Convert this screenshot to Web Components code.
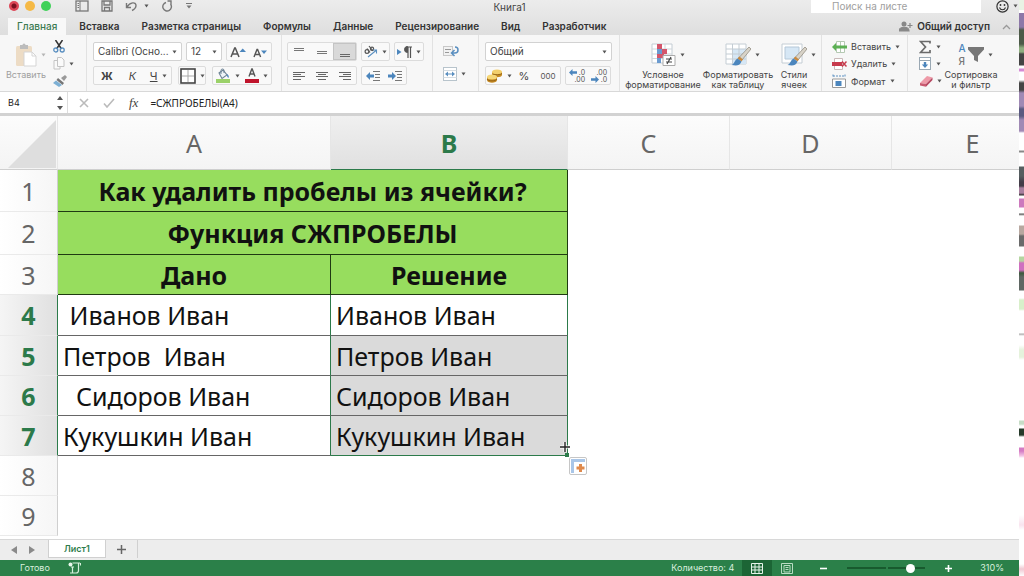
<!DOCTYPE html>
<html lang="ru">
<head>
<meta charset="utf-8">
<title>Книга1</title>
<style>
  html, body { margin: 0; height: 100%; overflow: hidden; background: #fff; }
  body { font-family: Inter, "Liberation Sans", sans-serif; color: #333; }
</style>
</head>
<body>
<workbook-app></workbook-app>
<script>
const ICONS = {
  sidebar: [14, 12, '<rect x="1" y="1" width="12" height="10" fill="none" stroke="#777" stroke-width="1.3"/><path d="M5 1v10M2.5 3.5h1.5M2.5 5.5h1.5M2.5 7.500h1.5" stroke="#777"/>'],
  save: [12, 12, '<path d="M1 1h10v10H1zM3 1v4h6V1M3.500 11V7.500h5V11" fill="none" stroke="#777" stroke-width="1.300"/>'],
  undo: [13, 12, '<path d="M1.500 3v4.500h4.500M2 7C5 2 11 1.500 11 5.500c0 2.500-2 4-4 5" fill="none" stroke="#777" stroke-width="1.400"/>'],
  redo: [12, 12, '<path d="M9.500 4A4.300 4.300 0 1 1 5 2.500M6.500 1h3.500v3.500" fill="none" stroke="#777" stroke-width="1.400"/>'],
  more: [8, 8, '<path d="M1 1.500h6" stroke="#777"/><path d="M1.500 3.500h5L4 6.500z" fill="#777"/>'],
  down: [5, 4, '<path d="M.5.500h4L2.500 3.500z" fill="#555"/>'],
  updown: [6, 14, '<path d="M3 0l3 4H0zM3 14l3-4H0z" fill="#555"/>'],
  smile: [13, 13, '<circle cx="6.500" cy="6.500" r="5.600" fill="none" stroke="#333" stroke-width="1.200"/><circle cx="4.500" cy="5" r=".9" fill="#333"/><circle cx="8.500" cy="5" r=".9" fill="#333"/><path d="M3.500 7.500c1 3 5 3 6 0" fill="none" stroke="#333" stroke-width="1.100"/>'],
  person: [14, 11, '<circle cx="5" cy="3" r="2.500" fill="#888"/><path d="M0 10c0-5 10-5 10 0zM8.500 4.500h5M11 2v5" fill="#888" stroke="#888" stroke-width="1.200"/>'],
  chevron: [9, 6, '<path d="M1 5l3.500-3.500L8 5" fill="none" stroke="#999" stroke-width="1.300"/>'],
  paste: [22, 24, '<rect x="1" y="3" width="16" height="20" rx="1.500" fill="#eddcc5"/><path d="M5 2h2.500a1.500 1.500 0 0 1 3 0H13v4H5z" fill="#bcbcbc"/><path d="M9 9h8l4 4v10H9z" fill="#fff" stroke="#d5d5d5"/><path d="M17 9v4h4" fill="none" stroke="#d5d5d5"/>'],
  cut: [12, 13, '<path d="M2.500 0l6 9M9.500 0l-6 9" stroke="#333" stroke-width="1.500"/><circle cx="2.800" cy="10" r="2" fill="none" stroke="#5a8fc0" stroke-width="1.300"/><circle cx="9.200" cy="10" r="2" fill="none" stroke="#5a8fc0" stroke-width="1.300"/>'],
  copy: [12, 13, '<path d="M1 3.500h6v8.500H1z" fill="#fafafa" stroke="#c4c4c4"/><path d="M4.500.500h4l2.500 2.500v6.500H4.500z" fill="#fafafa" stroke="#c4c4c4"/>'],
  brush: [14, 12, '<path d="M8 3l4-3 2 2-3 4z" fill="#9a9a9a"/><path d="M5 3l6 5-1.500 2L3.500 5z" fill="#777"/><path d="M3 5.500l6 4.500L6 12 0 8z" fill="#7db0d4"/>'],
  fontUp: [16, 12, '<path d="M1 11L4.700 2h.6L9 11M2.500 8h5" fill="none" stroke="#555" stroke-width="1.500"/><path d="M9.500 6L12.700 2.500 16 6z" fill="#4c86bd"/>'],
  fontDown: [14, 12, '<path d="M1 11L4 3.500h.6L7.600 11M2 8.500h4.600" fill="none" stroke="#555" stroke-width="1.400"/><path d="M8 4.500h6L11 8z" fill="#4c86bd"/>'],
  borders: [16, 16, '<rect x="1" y="1" width="14" height="14" fill="#fff" stroke="#444" stroke-width="1.600"/><path d="M8 2v12M2 8h12" stroke="#aaa"/>'],
  fill: [16, 15, '<path d="M4 5l4-3 4 5-5 3.500z" fill="#eef4f8" stroke="#6b8294" stroke-width="1.100"/><path d="M6 6V2.500a1.500 1.500 0 0 1 3 0V5" fill="none" stroke="#6b8294"/><path d="M12 6c2 1 2 3 1.500 4C12 9 12 8 12 6z" fill="#4c86bd"/><rect x="1" y="11" width="14" height="4" fill="#9bd169"/>'],
  fontColor: [14, 15, '<path d="M4 8.500L6.800 1h.4L10 8.500M5 6h4" fill="none" stroke="#555" stroke-width="1.400"/><rect y="11" width="14" height="4" fill="#c0142c"/>'],
  alTop: [12, 12, '<path d="M1 2.500h10M1 4.500h10" stroke="#777" stroke-width="1.200"/>'],
  alMid: [12, 12, '<path d="M1 5.500h10M1 7.500h10" stroke="#777" stroke-width="1.200"/>'],
  alBot: [12, 12, '<path d="M1 8.500h10M1 10.500h10" stroke="#666" stroke-width="1.200"/>'],
  alLeft: [12, 10, '<path d="M0 1.500h12M0 3.500h8M0 5.500h12M0 8.500h8" stroke="#666"/>'],
  alCenter: [12, 10, '<path d="M0 1.500h12M2 3.500h8M0 5.500h12M2 8.500h8" stroke="#666"/>'],
  alRight: [12, 10, '<path d="M0 1.500h12M4 3.500h8M0 5.500h12M4 8.500h8" stroke="#666"/>'],
  orient: [14, 13, '<circle cx="3" cy="6.500" r="1.900" fill="none" stroke="#555" stroke-width="1.200"/><path d="M3 3.500l3 4M5 1l4 5" stroke="#555" stroke-width="1.200"/><circle cx="8" cy="3.800" r="1.600" fill="none" stroke="#555" stroke-width="1.200"/><path d="M4 12l8-6.500M12.500 8.500V5H9" fill="none" stroke="#5a8fc0" stroke-width="1.100"/>'],
  rtl: [15, 12, '<path d="M0 3l4.500 3L0 9z" fill="#4c86bd"/><path d="M11 1v11M13.500 1v11M15 1H9" stroke="#555" stroke-width="1.200"/><path d="M10.500.500a3 3 0 0 0 0 6z" fill="#555" stroke="#555"/>'],
  outdent: [15, 10, '<path d="M7 .500h7M9 3.500h5M9 6.500h5M7 9.500h7" stroke="#777"/><path d="M0 5l4-4v2.500h4v3H4V9z" fill="#4c86bd"/>'],
  indent: [15, 10, '<path d="M7 .500h7M9 3.500h5M9 6.500h5M7 9.500h7" stroke="#777"/><path d="M8 5L4 1v2.500H0v3h4V9z" fill="#4c86bd"/>'],
  wrap: [17, 12, '<rect x=".5" y="1.500" width="9" height="9" fill="#f2f2f2" stroke="#c8c8c8"/><path d="M2 4.500h6M2 7.500h4" stroke="#999"/><path d="M12 2c4 0 4 6 0 6H9M11.500 5L8.500 8l3 3" fill="none" stroke="#5a8fc0" stroke-width="1.500"/>'],
  merge: [14, 14, '<rect x=".5" y=".5" width="13" height="13" fill="#fff" stroke="#b8c4cc"/><path d="M.5 3.500h13M.5 10.500h13" stroke="#d6dde2"/><path d="M2 7l3-2.500v2h4v-2L12 7 9 9.500v-2H5v2z" fill="#5a8fc0"/>'],
  coins: [17, 14, '<path d="M6 3v3c0 3 10 3 10 0V3z" fill="#c68a22"/><ellipse cx="11" cy="3" rx="5" ry="2.500" fill="#f3cf6c"/><path d="M1 8v3c0 3.500 10 3.500 10 0V8z" fill="#c68a22"/><ellipse cx="6" cy="8" rx="5" ry="2.500" fill="#f6d778"/><path d="M1 10c1 2.500 9 2.500 10 0M7 5c2 1 7 1 9-.5" fill="none" stroke="#8c5c12" stroke-width=".8"/>'],
  cond: [25, 24, '<path d="M1 1h20v19H1z" fill="#fff" stroke="#c4cdd4"/><path d="M1 6h20M1 11h20M1 15.500h20M7.500 1v19M14 1v19" stroke="#cfd6db"/><path d="M6 1h5v5H6zM6 11h7v4H6z" fill="#d4566b"/><path d="M11 6h5v5h-5z" fill="#d4566b"/><path d="M6 6h5v5H6zM6 15h4v5H6z" fill="#6b9bd0"/><path d="M12 12.500h12v10H12z" fill="#fff" stroke="#aaa"/><path d="M15 16h6M15 19h6M20 14l-4 7" stroke="#444" stroke-width="1.200"/>'],
  fmtTable: [26, 24, '<path d="M1 1h20v20H1z" fill="#fff" stroke="#c4cdd4"/><path d="M7.500 6H21v15H7.500z" fill="#d6e7f5"/><path d="M1 6h20M1 11h20M1 16h20M7.500 1v20M14 1v20" stroke="#c3ccd3"/><path d="M24 4l2 2-9 11-3.500-2z" fill="#d8d3c8" stroke="#8a8479" stroke-width=".7"/><path d="M14.500 13.500l3.500 3-1.500 2-4-3z" fill="#c88a40"/><path d="M12.500 15.500l4 3c-2 5-6 4-10 3.500 3-1 3-5 6-6.500z" fill="#4c86bd"/>'],
  styles: [26, 24, '<path d="M1 1h20v19H1z" fill="#fff" stroke="#c4cdd4"/><path d="M4 4h14v12H4z" fill="#d6e7f5" stroke="#b5c8d8"/><path d="M24 4l2 2-9 11-3.500-2z" fill="#d8d3c8" stroke="#8a8479" stroke-width=".7"/><path d="M14.500 13.500l3.500 3-1.500 2-4-3z" fill="#c88a40"/><path d="M12.500 15.500l4 3c-2 5-6 4-10 3.500 3-1 3-5 6-6.500z" fill="#4c86bd"/>'],
  insert: [15, 12, '<path d="M4.500.500h8v11h-8z" fill="#fff" stroke="#b5c9b3"/><path d="M8.500 1v10" stroke="#b5c9b3"/><path d="M0 6l4-4v2.500h11v3H4V10z" fill="#5cb054"/>'],
  remove: [15, 12, '<path d="M2.500.500h8v11h-8z" fill="#fff" stroke="#c9b9b9"/><path d="M0 4h10v4H0z" fill="#c73a4c"/><path d="M10 3.500l4.500 5M14.500 3.500l-4.500 5" stroke="#c73a4c" stroke-width="1.500"/>'],
  format: [15, 14, '<path d="M1 2h12M1 .500v3M13 .500v3" stroke="#5a8fc0" stroke-dasharray="2 1"/><path d="M.5 5h13v8.500H.5z" fill="#fff" stroke="#999"/><path d="M3.500 7h6v5h-6z" fill="#4c86bd"/>'],
  sum: [13, 14, '<path d="M11 3.500V1.500H1.500l5 5.500-5 5.500H11V10" fill="none" stroke="#6a6a6a" stroke-width="1.700"/>'],
  fillDown: [13, 13, '<rect x=".5" y=".5" width="11" height="12" fill="#fff" stroke="#9aa8b3"/><path d="M1 3.500h10" stroke="#9aa8b3"/><path d="M4.800 5h2.400v2.500h2L6 11 2.800 7.500h2z" fill="#4c86bd"/>'],
  eraser: [14, 12, '<path d="M8 1l5.500 1.500L7 9 1 8z" fill="#ee9aa8"/><path d="M1 8l6 1v2.800L1 10.500z" fill="#c95a70"/><path d="M7 9l6.500-6.500V5L7 11.800z" fill="#b64760"/>'],
  funnel: [16, 16, '<path d="M0 0h16v2.500L10 9v6l-4-2V9L0 2.500z" fill="#777"/>'],
  cross: [10, 10, '<path d="M1 1l8 8M9 1L1 9" stroke="#bbb" stroke-width="1.600"/>'],
  check: [12, 10, '<path d="M1 5.500L4 9l7-8" fill="none" stroke="#bbb" stroke-width="1.600"/>'],
  decUp: [8, 7, '<path d="M0 3.500L3.500 0v2.200H8v2.600H3.500V7z" fill="#4c86bd"/>'],
  prev: [6, 8, '<path d="M6 0v8L0 4z" fill="#8a8a8a"/>'],
  next: [6, 8, '<path d="M0 0v8l6-4z" fill="#8a8a8a"/>'],
  plus: [9, 9, '<path d="M4.500 0v9M0 4.500h9" stroke="#666" stroke-width="1.500"/>'],
  macro: [13, 12, '<path d="M4.500 1H12M10.500 1v7.500c0 2-1.500 2.500-2.500 2.500H2M12.500 1v2.500" fill="none" stroke="#d5f0dc" stroke-width="1.200"/><circle cx="2.500" cy="2.500" r="2" fill="#e8f8ec"/><path d="M4.500 5v6M3 5h3" stroke="#d5f0dc" stroke-width="1.200"/>'],
  viewGrid: [12, 11, '<path d="M.5.500h11v10H.5zM.5 4h11M.5 7h11M4 .500v10M8 .500v10" fill="none" stroke="#e5f4e9"/>'],
  viewPage: [12, 11, '<path d="M.5.500h11v10H.5zM3 2.500h6v6.500H3zM4.500 4.500h3M4.500 6.500h3" fill="none" stroke="#b9dcc3"/>'],
  zoomOut: [7, 7, '<path d="M0 3.500h7" stroke="#fff" stroke-width="1.600"/>'],
  zoomIn: [7, 7, '<path d="M0 3.500h7M3.500 0v7" stroke="#fff" stroke-width="1.600"/>'],
  corner: [48, 48, '<path d="M48 0v48H0z" fill="#dedede"/>'],
  cursor: [10, 10, '<path d="M5 0v10M0 5h10" stroke="#fff" stroke-width="3"/><path d="M5 0v10M0 5h10" stroke="#222" stroke-width="1.400"/>'],
  pasteOpt: [14, 14, '<path d="M0 0h14v3H3v11H0z" fill="#a9c6e8"/><path d="M9.500 5v8M5.500 9h8" stroke="#e08a4c" stroke-width="3"/>']
};

const define = (name, html, setup) => {
  const template = document.createElement('template');
  template.innerHTML = html;
  customElements.define(name, class extends HTMLElement {
    constructor() {
      super();
      this.attachShadow({ mode: 'open' }).append(template.content.cloneNode(true));
    }
    connectedCallback() { if (setup) setup(this, this.shadowRoot); }
  });
};

define('ui-icon', '<style>:host{display:inline-flex;flex:none}svg{display:block}</style><svg aria-hidden="true"></svg>', (el, root) => {
  const [w, h, body] = ICONS[el.getAttribute('name')];
  const svg = root.querySelector('svg');
  svg.setAttribute('width', w);
  svg.setAttribute('height', h);
  svg.setAttribute('viewBox', `0 0 ${w} ${h}`);
  svg.innerHTML = body;
});

define('tool-button', `<style>
  :host { display: block; }
  button { all: unset; box-sizing: border-box; width: 100%; height: 100%; display: flex; align-items: center; justify-content: center; gap: var(--gap, 4px); cursor: default; }
  :host([pressed]) button { background: #d9d9d9; box-shadow: inset 0 0 0 1px #c4c4c4; }
</style><button type="button"><slot></slot></button>`, (el, root) => {
  const b = root.querySelector('button');
  if (el.hasAttribute('label')) b.setAttribute('aria-label', el.getAttribute('label'));
  if (el.hasAttribute('pressed')) b.setAttribute('aria-pressed', 'true');
});

define('button-strip', `<style>
  :host { display: flex; box-sizing: border-box; height: 19px; border: 1px solid #dcdcdc; border-radius: 2px; background: #f9f9f9; }
  ::slotted(tool-button) { flex: 1; }
</style><slot></slot>`);

define('combo-box', `<style>
  :host { display: grid; grid-template: 17px / 1fr; box-sizing: border-box; height: 19px; border: 1px solid #d2d2d2; border-radius: 2px; background: #fff; align-items: center; }
  select { all: unset; grid-area: 1 / 1; padding: 0 4px; font: 10px/17px Inter, sans-serif; color: #444; white-space: nowrap; }
  ui-icon { grid-area: 1 / 1; justify-self: end; padding: 0 4px; pointer-events: none; }
</style><select></select><ui-icon name="down"></ui-icon>`, (el, root) => {
  const s = root.querySelector('select');
  s.setAttribute('aria-label', el.getAttribute('label'));
  s.add(new Option(el.getAttribute('value')));
});

define('title-bar', `<style>
  :host { display: grid; grid-template-columns: 1fr auto 1fr; height: 18px; align-items: start; }
  .left { display: flex; align-items: center; height: 11px; padding-left: 9px; }
  .light { all: unset; width: 10px; height: 10px; border-radius: 50%; margin-right: 6px; background: var(--c); }
  .light.close { background: radial-gradient(circle, #7a1020 2px, #dd4556 3px); }
  .tools { display: flex; align-items: center; gap: 12px; padding-left: 18px; --gap: 6px; }
  h1 { margin: 0; font-size: 10px; line-height: 14px; font-weight: 400; color: #444; }
  .right { display: flex; justify-content: flex-end; align-items: start; }
  input { all: unset; box-sizing: border-box; width: 170px; height: 13px; padding: 0 21px; background: #fff; font-size: 10px; line-height: 13px; }
  input::placeholder { color: #a0a0a0; opacity: 1; }
  .face { width: 38px; height: 12px; padding-left: 14px; box-sizing: border-box; }
</style>
<div class="left">
  <button class="light close" aria-label="Закрыть"></button>
  <button class="light" style="--c:#f5b945" aria-label="Свернуть"></button>
  <button class="light" style="--c:#3fd158" aria-label="Развернуть"></button>
  <div class="tools">
    <tool-button label="Область"><ui-icon name="sidebar"></ui-icon></tool-button>
    <tool-button label="Сохранить"><ui-icon name="save"></ui-icon></tool-button>
    <tool-button label="Отменить"><ui-icon name="undo"></ui-icon><ui-icon name="down"></ui-icon></tool-button>
    <tool-button label="Вернуть"><ui-icon name="redo"></ui-icon></tool-button>
    <tool-button label="Настройка панели"><ui-icon name="more"></ui-icon></tool-button>
  </div>
</div>
<h1>Книга1</h1>
<div class="right">
  <input type="search" placeholder="Поиск на листе" aria-label="Поиск на листе">
  <tool-button class="face" label="Отзыв"><ui-icon name="smile"></ui-icon><ui-icon name="down"></ui-icon></tool-button>
</div>`);

define('ribbon-tab', `<style>
  :host { display: block; }
  a { display: block; padding: 0 9px; font-size: 10px; line-height: 17px; font-weight: 600; color: #333; text-decoration: none; white-space: nowrap; }
  :host([active]) a { background: #f8f8f8; color: #3c7a52; font-weight: 500; }
</style><a href="#"><slot></slot></a>`);

define('ribbon-tabs', `<style>
  :host { display: flex; justify-content: space-between; height: 17px; }
  nav { display: flex; gap: 4px; padding-left: 8px; }
  .share { display: flex; gap: 12px; padding-right: 8px; }
  .share b { font-size: 10px; line-height: 17px; font-weight: 600; }
</style>
<nav><ribbon-tab active>Главная</ribbon-tab><ribbon-tab>Вставка</ribbon-tab><ribbon-tab>Разметка страницы</ribbon-tab><ribbon-tab>Формулы</ribbon-tab><ribbon-tab>Данные</ribbon-tab><ribbon-tab>Рецензирование</ribbon-tab><ribbon-tab>Вид</ribbon-tab><ribbon-tab>Разработчик</ribbon-tab></nav>
<div class="share"><tool-button><ui-icon name="person"></ui-icon><b>Общий доступ</b></tool-button><tool-button label="Свернуть ленту"><ui-icon name="chevron"></ui-icon></tool-button></div>`);

define('ribbon-group', `<style>
  :host { display: flex; flex: none; box-sizing: border-box; padding: 7px var(--pr, 7px) 0 var(--pl, 6px); border-right: 1px solid #e2e2e2; }
  :host([last]) { border: 0; }
</style><slot></slot>`);

define('big-button', `<style>
  :host { display: block; }
  button { all: unset; display: flex; flex-direction: column; align-items: center; width: 100%; }
  .pic { display: flex; align-items: center; height: 26px; gap: 4px; padding-left: 9px; }
  .text { margin-top: 2px; font-size: 9px; line-height: 10px; color: #444; text-align: center; white-space: nowrap; }
  :host([disabled]) .text { color: #a0a0a0; }
  :host([disabled]) .arrow { opacity: .4; }
</style><button type="button"><span class="pic"><slot name="pic"></slot><ui-icon class="arrow" name="down"></ui-icon></span><span class="text"><slot></slot></span></button>`);

define('ribbon-toolbar', `<style>
  :host { display: flex; height: 56px; background: #f7f7f7; border-bottom: 1px solid #d8d8d8; color: #444; }
  .rows { display: flex; flex-direction: column; gap: 5px; }
  .row { display: flex; gap: 4px; }
  .spread { justify-content: space-between; }
  .small { display: flex; flex-direction: column; justify-content: space-between; height: 52px; margin-top: -4px; }
  .line { display: flex; align-items: center; height: 18px; font-size: 9px; }
  .paste { width: 44px; margin-right: 5px; }
  .w27 { width: 27px; } .w28 { width: 28px; } .w29 { width: 29px; } .w30 { width: 30px; } .w36 { width: 36px; } .w38 { width: 38px; }
  .w46 { width: 46px; } .w50 { width: 50px; } .w60 { width: 60px; } .w65 { width: 65px; } .w70 { width: 70px; } .w74 { width: 74px; }
  .w76 { width: 76px; } .w79 { width: 79px; } .w89 { width: 89px; } .w127 { width: 127px; }
  .glyph { font-size: 11px; line-height: 12px; color: #444; }
  .tiny { font-size: 8px; line-height: 8px; color: #555; }
  .dec { display: grid; grid-template-columns: 8px auto; align-items: center; gap: 0 2px; font-size: 7px; line-height: 7px; color: #555; }
  .dec .wide { grid-column: 1 / 3; justify-self: end; }
  .flip { transform: scaleX(-1); }
  .ar { display: grid; color: #777; font-size: 10px; line-height: 13px; font-weight: 500; }
  .ar .a { color: #4c86bd; }
  .sort { display: flex; align-items: center; gap: 2px; }
</style>
<ribbon-group style="--pl:4px;--pr:6px">
  <big-button class="paste" disabled><ui-icon slot="pic" name="paste"></ui-icon>Вставить</big-button>
  <div class="small w27">
    <div class="line"><tool-button label="Вырезать"><ui-icon name="cut"></ui-icon></tool-button></div>
    <div class="line"><tool-button label="Копировать"><ui-icon name="copy"></ui-icon><ui-icon name="down"></ui-icon></tool-button></div>
    <div class="line"><tool-button label="Формат по образцу"><ui-icon name="brush"></ui-icon></tool-button></div>
  </div>
</ribbon-group>
<ribbon-group style="--pr:9px"><div class="rows">
  <div class="row">
    <combo-box class="w89" label="Шрифт" value="Calibri (Осно..."></combo-box>
    <combo-box class="w36" label="Размер" value="12"></combo-box>
    <button-strip class="w46"><tool-button label="Увеличить"><ui-icon name="fontUp"></ui-icon></tool-button><tool-button label="Уменьшить"><ui-icon name="fontDown"></ui-icon></tool-button></button-strip>
  </div>
  <div class="row spread">
    <button-strip class="w79"><tool-button><b class="glyph">Ж</b></tool-button><tool-button><i class="glyph">К</i></tool-button><tool-button><u class="glyph">Ч</u><ui-icon name="down"></ui-icon></tool-button></button-strip>
    <button-strip class="w28"><tool-button label="Границы"><ui-icon name="borders"></ui-icon><ui-icon name="down"></ui-icon></tool-button></button-strip>
    <button-strip class="w60"><tool-button label="Заливка"><ui-icon name="fill"></ui-icon><ui-icon name="down"></ui-icon></tool-button><tool-button label="Цвет текста"><ui-icon name="fontColor"></ui-icon><ui-icon name="down"></ui-icon></tool-button></button-strip>
  </div>
</div></ribbon-group>
<ribbon-group style="--pl:5px;--pr:8px"><div class="rows">
  <div class="row">
    <button-strip class="w70"><tool-button label="По верхнему краю"><ui-icon name="alTop"></ui-icon></tool-button><tool-button label="По середине"><ui-icon name="alMid"></ui-icon></tool-button><tool-button pressed label="По нижнему краю"><ui-icon name="alBot"></ui-icon></tool-button></button-strip>
    <button-strip class="w29"><tool-button label="Ориентация"><ui-icon name="orient"></ui-icon><ui-icon name="down"></ui-icon></tool-button></button-strip>
    <button-strip class="w30"><tool-button label="Направление текста"><ui-icon name="rtl"></ui-icon><ui-icon name="down"></ui-icon></tool-button></button-strip>
  </div>
  <div class="row">
    <button-strip class="w70"><tool-button label="По левому краю"><ui-icon name="alLeft"></ui-icon></tool-button><tool-button label="По центру"><ui-icon name="alCenter"></ui-icon></tool-button><tool-button label="По правому краю"><ui-icon name="alRight"></ui-icon></tool-button></button-strip>
    <button-strip class="w46"><tool-button label="Уменьшить отступ"><ui-icon name="outdent"></ui-icon></tool-button><tool-button label="Увеличить отступ"><ui-icon name="indent"></ui-icon></tool-button></button-strip>
  </div>
</div></ribbon-group>
<ribbon-group style="--pl:10px"><div class="rows w28">
  <div class="line"><tool-button label="Перенос текста"><ui-icon name="wrap"></ui-icon></tool-button></div>
  <div class="line"><tool-button label="Объединить"><ui-icon name="merge"></ui-icon><ui-icon name="down"></ui-icon></tool-button></div>
</div></ribbon-group>
<ribbon-group><div class="rows">
  <combo-box class="w127" label="Числовой формат" value="Общий"></combo-box>
  <div class="row">
    <button-strip class="w76"><tool-button label="Денежный формат"><ui-icon name="coins"></ui-icon><ui-icon name="down"></ui-icon></tool-button><tool-button><span class="glyph">%</span></tool-button><tool-button><span class="tiny">000</span></tool-button></button-strip>
    <button-strip class="w46"><tool-button><span class="dec"><ui-icon name="decUp"></ui-icon><span>.0</span><span class="wide">.00</span></span></tool-button><tool-button><span class="dec"><span class="wide">.00</span><ui-icon name="decUp" class="flip"></ui-icon><span>.0</span></span></tool-button></button-strip>
  </div>
</div></ribbon-group>
<ribbon-group style="--pl:5px;--pr:8px">
  <big-button class="w76"><ui-icon slot="pic" name="cond"></ui-icon>Условное<br>форматирование</big-button>
  <big-button class="w74"><ui-icon slot="pic" name="fmtTable"></ui-icon>Форматировать<br>как таблицу</big-button>
  <big-button class="w38"><ui-icon slot="pic" name="styles"></ui-icon>Стили<br>ячеек</big-button>
</ribbon-group>
<ribbon-group style="--pl:10px;--pr:10px"><div class="small w65">
  <div class="line"><tool-button><ui-icon name="insert"></ui-icon>Вставить<ui-icon name="down"></ui-icon></tool-button></div>
  <div class="line"><tool-button><ui-icon name="remove"></ui-icon>Удалить<ui-icon name="down"></ui-icon></tool-button></div>
  <div class="line"><tool-button><ui-icon name="format"></ui-icon>Формат<ui-icon name="down"></ui-icon></tool-button></div>
</div></ribbon-group>
<ribbon-group last style="--pl:11px">
  <div class="small w27">
    <div class="line"><tool-button label="Автосумма"><ui-icon name="sum"></ui-icon><ui-icon name="down"></ui-icon></tool-button></div>
    <div class="line"><tool-button label="Заполнить"><ui-icon name="fillDown"></ui-icon><ui-icon name="down"></ui-icon></tool-button></div>
    <div class="line"><tool-button label="Очистить"><ui-icon name="eraser"></ui-icon><ui-icon name="down"></ui-icon></tool-button></div>
  </div>
  <big-button class="w50"><span slot="pic" class="sort"><span class="ar"><span class="a">А</span><span>Я</span></span><ui-icon name="funnel"></ui-icon></span>Сортировка<br>и фильтр</big-button>
</ribbon-group>`);

define('formula-bar', `<style>
  :host { display: flex; align-items: center; height: 21px; background: #fff; border-bottom: 3px solid #d2d2d2; }
  input { all: unset; font: 10px/20px "Noto Sans", sans-serif; color: #222; min-width: 0; }
  .name { display: flex; align-items: center; box-sizing: border-box; width: 68px; height: 21px; padding: 0 4px 0 8px; border-right: 1px solid #ddd; }
  .name input { flex: 1; font: 9px/20px Inter, sans-serif; }
  .acts { display: flex; align-items: center; gap: 14px; padding: 0 12px 0 11px; }
  .fx { font: italic 13px/18px "Liberation Serif", serif; color: #444; }
  .formula { flex: 1; }
</style>
<div class="name"><input value="B4" aria-label="Имя ячейки"><ui-icon name="updown"></ui-icon></div>
<div class="acts"><tool-button label="Отмена"><ui-icon name="cross"></ui-icon></tool-button><tool-button label="Ввод"><ui-icon name="check"></ui-icon></tool-button><tool-button><span class="fx">fx</span></tool-button></div>
<input class="formula" value="=СЖПРОБЕЛЫ(A4)" aria-label="Строка формул">`);

define('sheet-grid', `<style>
  :host { display: block; overflow: hidden; background: #fff; }
  table { table-layout: fixed; border-collapse: separate; border-spacing: 0; width: 1054px; font: 25px/36px "Noto Sans", sans-serif; color: #111; }
  th, td { box-sizing: border-box; padding: 0; height: 40px; }
  thead th { height: 54px; font-weight: 400; color: #666; background: linear-gradient(#fcfcfc, #f4f4f4); border-bottom: 1px solid #cfcfcf; border-right: 1px solid #e6e6e6; }
  thead .sel { background: linear-gradient(#f0f0f0, #e0e0e0); border-bottom-color: #2c7a4a; color: #2c7a4a; font-weight: 700; }
  thead .all { padding: 4px 1px 0 8px; vertical-align: top; }
  .all ui-icon { display: block; }
  tbody th { font-weight: 400; color: #666; background: linear-gradient(90deg, #fff, #f6f6f6); border-bottom: 1px solid #eaeaea; border-right: 1px solid #cfcfcf; }
  tbody th.sel { background: linear-gradient(90deg, #f5f5f5, #e0e0e0); color: #2c7a4a; font-weight: 700; border-right-color: #2c7a4a; }
  .r1 > * { height: 42px; } .r2 > * { height: 43px; } .r4 > * { height: 41px; }
  .head { background: #97dd5e; border-bottom: 1px solid #1f3a12; border-right: 1px solid #1f3a12; text-align: center; font-weight: 700; }
  .a, .b { white-space: pre; padding-left: 5px; border-bottom: 1px solid #666; border-right: 1px solid #2c7a4a; }
  .pick { background: #dadada; }
  .end { position: relative; border-bottom-color: #2c7a4a; }
  .handle { position: absolute; right: -2px; bottom: -2px; width: 4px; height: 4px; background: #2c7a4a; }
  .cursor { position: absolute; right: -3px; bottom: 3px; }
  .opt { position: absolute; left: 100%; top: 100%; margin: 2px; padding: 1px; border: 1px solid #c6c6c6; border-radius: 2px; background: #fff; }
</style>
<table>
  <colgroup><col style="width:58px"><col style="width:273px"><col style="width:237px"><col style="width:162px"><col style="width:162px"><col style="width:162px"></colgroup>
  <thead><tr><th class="all"><ui-icon name="corner"></ui-icon></th><th>A</th><th class="sel">B</th><th>C</th><th>D</th><th>E</th></tr></thead>
  <tbody>
    <tr class="r1"><th>1</th><td class="head" colspan="2">Как удалить пробелы из ячейки?</td></tr>
    <tr class="r2"><th>2</th><td class="head" colspan="2">Функция СЖПРОБЕЛЫ</td></tr>
    <tr><th>3</th><td class="head">Дано</td><td class="head">Решение</td></tr>
    <tr class="r4"><th class="sel">4</th><td class="a"> Иванов Иван</td><td class="b">Иванов Иван</td></tr>
    <tr><th class="sel">5</th><td class="a">Петров  Иван</td><td class="b pick">Петров Иван</td></tr>
    <tr><th class="sel">6</th><td class="a">  Сидоров Иван</td><td class="b pick">Сидоров Иван</td></tr>
    <tr><th class="sel">7</th><td class="a">Кукушкин Иван</td><td class="b pick end">Кукушкин Иван<span class="handle"></span><ui-icon class="cursor" name="cursor"></ui-icon><ui-icon class="opt" name="pasteOpt"></ui-icon></td></tr>
    <tr><th>8</th></tr>
    <tr><th>9</th></tr>
  </tbody>
</table>`);

define('sheet-tabs', `<style>
  :host { display: flex; box-sizing: border-box; height: 21px; background: #ededed; border-top: 1px solid #d8d8d8; align-items: start; }
  .nav { display: flex; gap: 12px; box-sizing: border-box; width: 48px; padding-left: 11px; height: 20px; }
  a { box-sizing: border-box; width: 58px; height: 18px; background: #fff; border: 1px solid #d0d0d0; border-top: 0; text-align: center; font-size: 9px; line-height: 18px; font-weight: 600; color: #2f7d4c; text-decoration: none; }
  .add { width: 31px; height: 18px; border-right: 1px solid #d0d0d0; }
</style>
<div class="nav"><tool-button label="Назад"><ui-icon name="prev"></ui-icon></tool-button><tool-button label="Вперёд"><ui-icon name="next"></ui-icon></tool-button></div>
<a href="#">Лист1</a><tool-button class="add" label="Добавить лист"><ui-icon name="plus"></ui-icon></tool-button>`);

define('status-bar', `<style>
  :host { display: flex; justify-content: space-between; height: 16px; background: #2b8049; color: #d9efdf; font-size: 9px; line-height: 18px; }
  div { display: flex; align-items: center; }
  .left { padding-left: 20px; gap: 18px; }
  .right { padding-right: 15px; }
  .view { width: 30px; height: 16px; }
  .on { background: #1c6535; margin-left: 8px; }
  .out { margin-left: 18px; width: 7px; }
  .in { margin-left: 20px; width: 7px; }
  input { appearance: none; margin: 0 0 0 20px; width: 78px; height: 10px; background: linear-gradient(90deg, #185a2e 39px, #2b8049 39px 41px, #185a2e 41px) center / 100% 2px no-repeat; }
  input::-webkit-slider-thumb { appearance: none; width: 9px; height: 9px; border-radius: 50%; background: #fff; }
  .pct { margin-left: 28px; }
</style>
<div class="left"><span>Готово</span><ui-icon name="macro"></ui-icon></div>
<div class="right"><span>Количество: 4</span>
  <tool-button class="view on" label="Обычный"><ui-icon name="viewGrid"></ui-icon></tool-button>
  <tool-button class="view" label="Разметка"><ui-icon name="viewPage"></ui-icon></tool-button>
  <tool-button class="out" label="Уменьшить масштаб"><ui-icon name="zoomOut"></ui-icon></tool-button>
  <input type="range" min="0" max="100" value="85" aria-label="Масштаб">
  <tool-button class="in" label="Увеличить масштаб"><ui-icon name="zoomIn"></ui-icon></tool-button>
  <span class="pct">310%</span></div>`);

define('desktop-edge', `<style>
  :host { display: block; background: linear-gradient(#e9f2e4 0 10px, #fff 10px 13px, #8d78a8 13px 27px, #4c5a48 30px 44px, #8fae80 48px 52px, #444 54px 65px, #fff 66px 68px, #d58ad5 69px 71px, #fff 72px 80px, #444 83px 90px, #a08ab5 93px 106px, #5a5a80 109px 116px, #a08ab5 120px 131px, #fff 133px 150px, #888 151px 152px, #fff 153px 166px, #565e60 167px 176px, #433c48 182px 186px, #a8809f 188px 193px, #333 195px, #fff 196px 198px, #cc79bd 199px 207px, #fff 208px 213px, #555 214px, #fff 216px 225px, #b8a8a0 226px 234px, #6a6a6a 236px 246px, #fff 247px 256px, #b5d5a0 257px 261px, #cf6fc0 263px 270px, #3a5a3a 273px, #5f6763 277px 290px, #fff 291px 298px, #d8efca 300px 309px, #fff 311px 333px, #aaa 334px, #fff 336px 345px, #e5f2dc 350px 357px, #fff 360px 420px, #c6dcc6 421px 424px, #fff 426px 428px, #263a2a 429px 435px, #fff 437px 447px, #d47cc4 448px 451px, #f3c9e6 456px, #fff 458px 515px, #f8e3ee 525px, #fff 530px 564px, #f0c8d2 569px, #fff 576px); }
</style>`);

define('workbook-app', `<style>
  :host { display: grid; grid-template-columns: minmax(0, 1fr) 5px; height: 100vh; }
  main { display: flex; flex-direction: column; min-height: 0; }
  header { background: linear-gradient(#ececec, #dedede); }
  sheet-grid { flex: 1; min-height: 0; }
</style>
<main>
  <header><title-bar></title-bar><ribbon-tabs></ribbon-tabs></header>
  <ribbon-toolbar></ribbon-toolbar>
  <formula-bar></formula-bar>
  <sheet-grid></sheet-grid>
  <sheet-tabs></sheet-tabs>
  <status-bar></status-bar>
</main>
<desktop-edge></desktop-edge>`);
</script>
</body>
</html>
